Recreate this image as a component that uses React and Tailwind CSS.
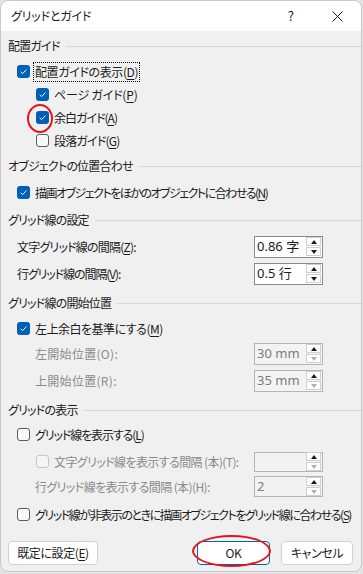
import React from "react";

const font = "font-['Yu_Gothic_UI','Noto_Sans_CJK_JP',sans-serif] [font-feature-settings:'palt']";

function Check({ checked, disabled }) {
  if (checked) {
    return (
      <span className="flex h-[13px] w-[13px] shrink-0 items-center justify-center rounded-[3px] bg-[#005fb8]">
        <svg width="9" height="9" viewBox="0 0 9 9">
          <path d="M1.7 4.8 L3.6 6.6 L7.4 2.6" fill="none" stroke="#fff" strokeWidth="1" />
        </svg>
      </span>
    );
  }
  return (
    <span
      className={
        "block h-[13px] w-[13px] shrink-0 rounded-[3px] border " +
        (disabled ? "border-[#c6c6c6] bg-[#f5f5f5]" : "border-[#5d5d5d] bg-[#f9f9f9]")
      }
    />
  );
}

function Heading({ children, className }) {
  return (
    <div className={"flex h-[20px] items-center gap-[6px] pl-[7px] " + (className || "")}>
      <span className="whitespace-nowrap text-[12px] tracking-[-0.8px] text-[#1b1b1b]">{children}</span>
      <span className="h-px flex-1 bg-[#d6d6d6]" />
    </div>
  );
}

function Row({ indent, checked, disabled, children, className, track }) {
  return (
    <div
      className={
        "flex h-[23px] items-center gap-[5px] " +
        (indent ? "pl-[35px] " : "pl-[16px] ") +
        (className || "")
      }
    >
      <Check checked={checked} disabled={disabled} />
      <span
        className={
          "whitespace-nowrap text-[12px] " +
          (track || "tracking-[-0.6px] ") +
          (disabled ? " text-[#8a8a8a]" : " text-[#1b1b1b]")
        }
      >
        {children}
      </span>
    </div>
  );
}

function Key({ k }) {
  return (
    <>
      (<span className="underline underline-offset-2">{k}</span>)
    </>
  );
}

function Spin({ value, disabled, downDisabled, h }) {
  return (
    <div
      className={
        "ml-auto mr-[38px] flex w-[69px] shrink-0 items-center border " +
        h +
        " " +
        (disabled ? "border-[#b4b4b4] bg-[#f3f3f3]" : "border-[#8a8a8a] bg-white")
      }
    >
      <span
        className={
          "flex-1 pl-[2px] font-['Segoe_UI','Noto_Sans','Noto_Sans_CJK_JP',sans-serif] text-[13px] tracking-normal " +
          (disabled ? "text-[#7b7b7b]" : "text-[#1b1b1b]")
        }
      >
        {value}
      </span>
      <div className="mr-[1px] flex w-[15px] flex-col gap-[1px]">
        <span className="flex h-[9px] items-center justify-center border border-[#cfcfcf] bg-white">
          <svg width="6" height="4" viewBox="0 0 6 4">
            <path d="M0 4 L3 0 L6 4 Z" fill="#1b1b1b" />
          </svg>
        </span>
        <span className="flex h-[9px] items-center justify-center border border-[#cfcfcf] bg-white">
          <svg width="6" height="4" viewBox="0 0 6 4">
            <path d="M0 0 L6 0 L3 4 Z" fill={disabled || downDisabled ? "#b0b0b0" : "#1b1b1b"} />
          </svg>
        </span>
      </div>
    </div>
  );
}

function InputRow({ label, value, disabled, downDisabled, indent, rowH, boxH, track }) {
  return (
    <div className={"flex items-center " + rowH + (indent ? " pl-[34px]" : " pl-[16px]")}>
      <span
        className={
          "whitespace-nowrap text-[12px] " +
          (track || "tracking-[-0.6px]") +
          (disabled ? " text-[#8a8a8a]" : " text-[#1b1b1b]")
        }
      >
        {label}
      </span>
      <Spin value={value} disabled={disabled} downDisabled={downDisabled} h={boxH} />
    </div>
  );
}

function Button({ children, className }) {
  return (
    <button
      className={
        "flex h-[24px] items-center justify-center rounded-[4px] border bg-white text-[12px] tracking-[-0.4px] text-[#1b1b1b] " +
        className
      }
    >
      {children}
    </button>
  );
}

export default function App() {
  return (
    <div className={"h-[574px] w-[363px] bg-[#e4e4e4] " + font}>
      <div className="relative h-[572px] w-[362px] overflow-hidden rounded-[8px] border border-[#c9c9c9] bg-[#f0f0f0]">
        {/* Title bar */}
        <div className="flex h-[30px] items-center bg-white pl-[10px]">
          <span className="text-[12px] tracking-[-0.2px] text-[#1b1b1b]">グリッドとガイド</span>
          <span className="ml-auto mr-[38px] text-[13px] text-[#1b1b1b]">?</span>
          <svg className="mr-[18px]" width="11" height="11" viewBox="0 0 11 11">
            <path d="M0.5 0.5 L10.5 10.5 M10.5 0.5 L0.5 10.5" stroke="#1b1b1b" strokeWidth="1" />
          </svg>
        </div>

        <div className="pt-[5px]">
          <Heading>配置ガイド</Heading>
          <div className="mt-[4px]">
            <div className="flex h-[23px] items-center gap-[3px] pl-[16px]">
              <Check checked />
              <span className="whitespace-nowrap border border-dotted border-black px-[1px] text-[12px] leading-[18px] tracking-[-0.4px] text-[#1b1b1b]">
                配置ガイドの表示<Key k="D" />
              </span>
            </div>
            <Row indent checked track="tracking-[-0.2px]">
              ページ ガイド<Key k="P" />
            </Row>
            <Row indent checked track="tracking-[-1px]">
              余白ガイド<Key k="A" />
            </Row>
            <Row indent track="tracking-[-0.8px]">
              段落ガイド<Key k="G" />
            </Row>
          </div>

          <Heading className="mt-[4px]">オブジェクトの位置合わせ</Heading>
          <Row checked className="mt-[5px]" track="tracking-[-1.5px]">
            描画オブジェクトをほかのオブジェクトに合わせる<Key k="N" />
          </Row>

          <Heading className="mt-[6px]">グリッド線の設定</Heading>
          <div className="mt-[3px]">
            <InputRow
              rowH="h-[27px]"
              boxH="h-[22px]"
              track="tracking-[-0.8px]"
              label={<>文字グリッド線の間隔<Key k="Z" />:</>}
              value="0.86 字"
            />
            <InputRow
              rowH="h-[27px]"
              boxH="h-[22px]"
              track="tracking-[-1.1px]"
              label={<>行グリッド線の間隔<Key k="V" />:</>}
              value="0.5 行"
            />
          </div>

          <Heading className="mt-[6px]">グリッド線の開始位置</Heading>
          <Row checked className="mt-[4px]" track="tracking-[-0.5px]">
            左上余白を基準にする<Key k="M" />
          </Row>
          <InputRow indent disabled rowH="h-[27px]" boxH="h-[22px]" track="tracking-[0.3px]" label="左開始位置(O):" value="30 mm" />
          <InputRow indent disabled rowH="h-[27px]" boxH="h-[22px]" track="tracking-[0.3px]" label="上開始位置(R):" value="35 mm" />

          <Heading className="mt-[6px]">グリッドの表示</Heading>
          <Row className="mt-[3px]" track="tracking-[-1.1px]">
            グリッド線を表示する<Key k="L" />
          </Row>
          <div className="mt-[3px]">
            <div className="flex h-[25px] items-center pl-[35px]">
              <Check disabled />
              <span className="ml-[5px] whitespace-nowrap text-[12px] tracking-[-0.6px] text-[#8a8a8a]">
                文字グリッド線を表示する間隔 (本)(T):
              </span>
              <Spin value="" disabled h="h-[20px]" />
            </div>
            <InputRow
              indent
              disabled
              downDisabled
              rowH="h-[25px]"
              boxH="h-[21px]"
              track="tracking-[-0.6px]"
              label="行グリッド線を表示する間隔 (本)(H):"
              value="2"
            />
          </div>
          <Row className="mt-[4px]" track="tracking-[-1.45px]">
            グリッド線が非表示のときに描画オブジェクトをグリッド線に合わせる<Key k="S" />
          </Row>

          {/* Buttons */}
          <div className="mt-[15px] flex items-center pl-[7px] pr-[8px]">
            <Button className="w-[90px] border-[#d1d1d1]">
              既定に設定<Key k="E" />
            </Button>
            <Button className="ml-auto w-[73px] border-[#005fb8]">OK</Button>
            <Button className="ml-[11px] w-[72px] border-[#d1d1d1]">キャンセル</Button>
          </div>
        </div>

        {/* Red annotation ellipses */}
        <span className="pointer-events-none absolute left-[26px] top-[103px] h-[29px] w-[26px] rounded-[50%] border-2 border-[#e3141c]" />
        <span className="pointer-events-none absolute left-[191px] top-[534px] h-[32px] w-[79px] rounded-[50%] border-2 border-[#e3141c]" />
      </div>
    </div>
  );
}
